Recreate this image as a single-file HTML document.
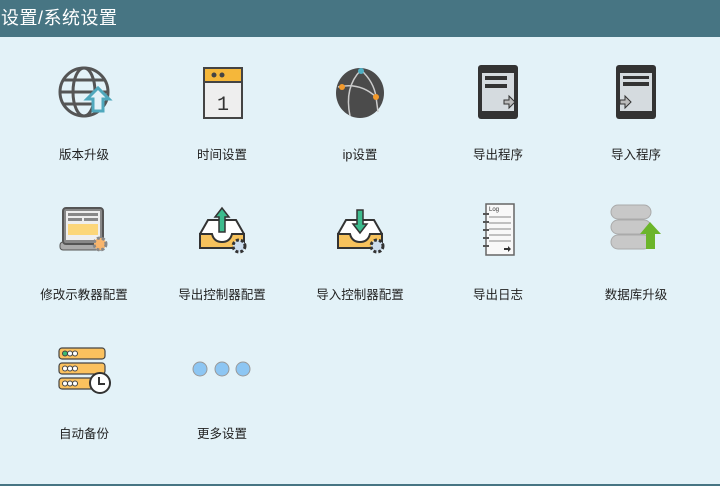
<!DOCTYPE html>
<html><head><meta charset="utf-8"><style>
body{margin:0;width:720px;height:486px;background:#e3f2f8;font-family:"Liberation Sans","Noto Sans CJK SC",sans-serif;position:relative;overflow:hidden}
.hd{position:absolute;left:0;top:0;width:720px;height:37px;background:#477583;color:#fff;font-size:18px;line-height:37px;padding-left:1px;letter-spacing:0.5px}
.topl{position:absolute;left:0;top:0;width:720px;height:1px;background:#aaa}
.bl{position:absolute;left:0;top:484px;width:720px;height:2px;background:#477583}
.it{position:absolute;width:138px;text-align:center}
.it svg{position:absolute;left:39px;top:0}
.it span{position:absolute;left:0;width:138px;font-size:12.5px;color:#222}
</style></head><body>
<div class="topl"></div>
<div class="hd">设置/系统设置</div>

<div class="it" style="left:15px;top:62px"><svg width="60" height="60" viewBox="0 0 60 60"><g fill="none" stroke="#555" stroke-width="3"><circle cx="30" cy="30" r="24"/><ellipse cx="30" cy="30" rx="11" ry="24"/><line x1="6" y1="30" x2="54" y2="30"/><path d="M10 18h40M10 42h40"/></g><path d="M44 26l-11 11h6v12h10V37h6z" fill="#e3f2f8" stroke="#4fa8bd" stroke-width="3"/></svg><span style="top:82px">版本升级</span></div>
<div class="it" style="left:153px;top:62px"><svg width="60" height="60" viewBox="0 0 60 60"><rect x="12" y="6" width="38" height="50" fill="#eee" stroke="#444" stroke-width="2"/><rect x="12" y="6" width="38" height="14" fill="#f5b73a" stroke="#444" stroke-width="2"/><circle cx="22" cy="13" r="2.5" fill="#444"/><circle cx="30" cy="13" r="2.5" fill="#444"/><text x="31" y="48" font-size="20" text-anchor="middle" fill="#333" font-family="Liberation Mono">1</text></svg><span style="top:82px">时间设置</span></div>
<div class="it" style="left:291px;top:62px"><svg width="60" height="60" viewBox="0 0 60 60"><ellipse cx="30" cy="31" rx="24" ry="25" fill="#4b4b4b"/><g stroke="#ccc" stroke-width="1.5" fill="none"><path d="M8 25Q30 20 46 35M31 8Q14 25 20 54M31 8Q44 20 46 35L48 50"/></g><circle cx="31" cy="9" r="3" fill="#4fb0c4"/><circle cx="12" cy="25" r="3" fill="#f39a2c"/><circle cx="46" cy="35" r="3" fill="#f39a2c"/></svg><span style="top:82px">ip设置</span></div>
<div class="it" style="left:429px;top:62px"><svg width="60" height="60" viewBox="0 0 60 60"><rect x="10" y="3" width="40" height="54" rx="3" fill="#333"/><rect x="14" y="11" width="32" height="38" fill="#d5dbdf"/><rect x="17" y="14" width="22" height="4" fill="#333"/><rect x="17" y="22" width="22" height="4" fill="#333"/><path d="M36 38h5v-4l6 6-6 6v-4h-5z" fill="#bbb" stroke="#333"/></svg><span style="top:82px">导出程序</span></div>
<div class="it" style="left:567px;top:62px"><svg width="60" height="60" viewBox="0 0 60 60"><rect x="10" y="3" width="40" height="54" rx="3" fill="#333"/><rect x="14" y="11" width="32" height="38" fill="#d5dbdf"/><rect x="17" y="14" width="26" height="3" fill="#333"/><rect x="17" y="20" width="26" height="4" fill="#333"/><path d="M14 38h5v-4l6 6-6 6v-4h-5z" fill="#bbb" stroke="#333"/></svg><span style="top:82px">导入程序</span></div>

<div class="it" style="left:15px;top:200px"><svg width="60" height="60" viewBox="0 0 60 60"><rect x="6" y="42" width="44" height="8" rx="3" fill="#aaa" stroke="#555"/><rect x="9" y="8" width="40" height="36" rx="3" fill="#888" stroke="#555" stroke-width="2"/><rect x="12" y="11" width="34" height="29" fill="#eee"/><rect x="14" y="13" width="30" height="3" fill="#888"/><rect x="14" y="18" width="14" height="3" fill="#888"/><rect x="30" y="18" width="14" height="3" fill="#888"/><rect x="14" y="24" width="30" height="11" fill="#fcd679"/><circle cx="46" cy="44" r="6" fill="#f8b56c" stroke="#888" stroke-width="3" stroke-dasharray="3 2"/></svg><span style="top:84px">修改示教器配置</span></div>
<div class="it" style="left:153px;top:200px"><svg width="60" height="60" viewBox="0 0 60 60"><path d="M8 34l8-14h28l8 14v14H8z" fill="#fff" stroke="#333" stroke-width="2"/><path d="M8 34h12q2 8 10 8t10-8h12v14H8z" fill="#f7c25c" stroke="#333" stroke-width="2"/><path d="M30 8l-7 9h4v15h6V17h4z" fill="#3cbb8d" stroke="#333" stroke-width="1.5"/><circle cx="47" cy="46" r="6" fill="#cde" stroke="#333" stroke-width="3" stroke-dasharray="3 2"/></svg><span style="top:84px">导出控制器配置</span></div>
<div class="it" style="left:291px;top:200px"><svg width="60" height="60" viewBox="0 0 60 60"><path d="M8 34l8-14h28l8 14v14H8z" fill="#fff" stroke="#333" stroke-width="2"/><path d="M8 34h12q2 8 10 8t10-8h12v14H8z" fill="#f7c25c" stroke="#333" stroke-width="2"/><path d="M30 33l-7-9h4V10h6v14h4z" fill="#3cbb8d" stroke="#333" stroke-width="1.5"/><circle cx="47" cy="46" r="6" fill="#cde" stroke="#333" stroke-width="3" stroke-dasharray="3 2"/></svg><span style="top:84px">导入控制器配置</span></div>
<div class="it" style="left:429px;top:200px"><svg width="60" height="60" viewBox="0 0 60 60"><rect x="18" y="4" width="28" height="51" fill="#f8f8f8" stroke="#666" stroke-width="1.5"/><text x="21" y="11" font-size="6" fill="#333">Log</text><g stroke="#888"><path d="M21 17h22M21 23h22M21 29h22M21 35h22M21 41h22"/></g><g fill="#555"><rect x="15" y="13" width="6" height="2"/><rect x="15" y="21" width="6" height="2"/><rect x="15" y="29" width="6" height="2"/><rect x="15" y="37" width="6" height="2"/><rect x="15" y="45" width="6" height="2"/></g><path d="M36 48h4v-2l3 3-3 3v-2h-4z" fill="#333"/></svg><span style="top:84px">导出日志</span></div>
<div class="it" style="left:567px;top:200px"><svg width="60" height="60" viewBox="0 0 60 60"><g fill="#c8c8c8" stroke="#aaa"><rect x="5" y="35" width="40" height="14" rx="7"/><rect x="5" y="20" width="40" height="14" rx="7"/><rect x="5" y="5" width="40" height="14" rx="7"/></g><path d="M44 22l-10 12h6v15h9V34h6z" fill="#6bb52a"/></svg><span style="top:84px">数据库升级</span></div>

<div class="it" style="left:15px;top:340px"><svg width="60" height="60" viewBox="0 0 60 60"><g fill="#fbc15e" stroke="#444" stroke-width="1.2"><rect x="5" y="8" width="46" height="11" rx="3"/><rect x="5" y="23" width="46" height="11" rx="3"/><rect x="5" y="38" width="46" height="11" rx="3"/></g><circle cx="11" cy="13.5" r="2.5" fill="#3cbb70" stroke="#444"/><g fill="#fff" stroke="#444"><circle cx="16" cy="13.5" r="2.5"/><circle cx="21" cy="28.5" r="2.5"/><circle cx="21" cy="13.5" r="2.5"/><circle cx="11" cy="28.5" r="2.5"/><circle cx="16" cy="28.5" r="2.5"/><circle cx="11" cy="43.5" r="2.5"/><circle cx="16" cy="43.5" r="2.5"/><circle cx="21" cy="43.5" r="2.5"/></g><circle cx="46" cy="43" r="10" fill="#fff" stroke="#333" stroke-width="2"/><path d="M45 37v7h6" fill="none" stroke="#333" stroke-width="2"/></svg><span style="top:83px">自动备份</span></div>
<div class="it" style="left:153px;top:340px"><svg width="60" height="60" viewBox="0 0 60 60"><g fill="#8dc6f3" stroke="#999"><circle cx="8" cy="29" r="7"/><circle cx="30" cy="29" r="7"/><circle cx="51" cy="29" r="7"/></g></svg><span style="top:83px">更多设置</span></div>
<div class="bl"></div>
</body></html>
